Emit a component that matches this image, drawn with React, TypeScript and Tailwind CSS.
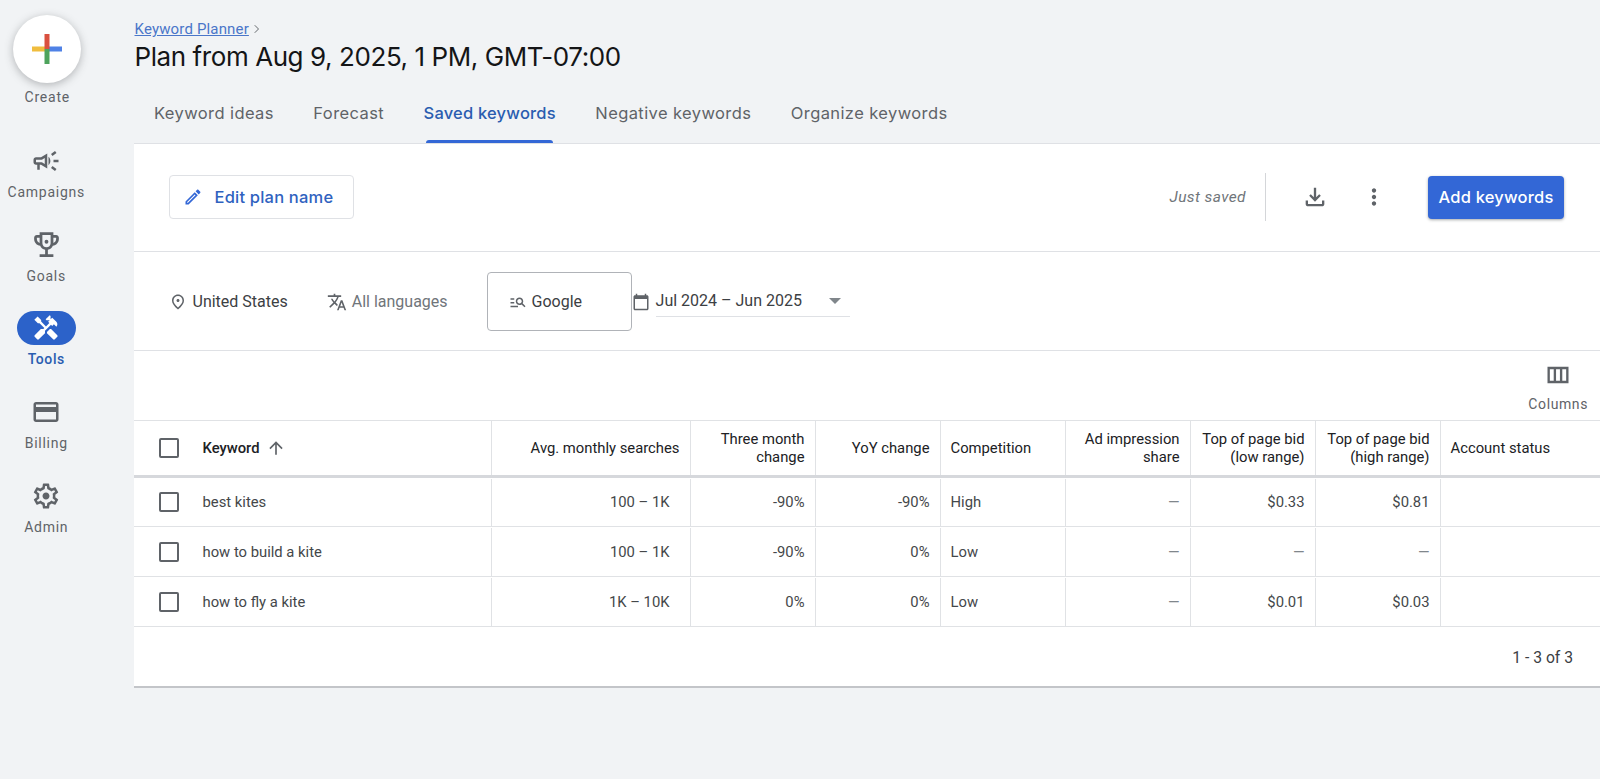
import React from "react";

const P: Record<string, string> = {
  campaign: "M18 11v2h4v-2h-4zm-2 6.61c.96.71 2.21 1.65 3.2 2.39.4-.53.8-1.07 1.2-1.6-.99-.74-2.24-1.68-3.2-2.4-.4.54-.8 1.08-1.2 1.61zM20.4 5.6c-.4-.53-.8-1.07-1.2-1.6-.99.74-2.24 1.68-3.2 2.4.4.53.8 1.07 1.2 1.6.96-.72 2.21-1.65 3.2-2.4zM4 9c-1.1 0-2 .9-2 2v2c0 1.1.9 2 2 2h1v4h2v-4h1l5 3V6L8 9H4zm5.03 1.71L11 9.53v4.94l-1.97-1.18-.48-.29H4v-2h4.55l.48-.29zM15.5 12c0-1.33-.58-2.53-1.5-3.35v6.69c.92-.81 1.5-2.01 1.5-3.34z",
  trophy: "M19 5h-2V3H7v2H5c-1.1 0-2 .9-2 2v1c0 2.55 1.92 4.63 4.39 4.94.63 1.5 1.98 2.63 3.61 2.96V19H7v2h10v-2h-4v-3.1c1.63-.33 2.98-1.46 3.61-2.96C19.08 12.63 21 10.55 21 8V7c0-1.1-.9-2-2-2zM5 8V7h2v3.82C5.84 10.4 5 9.3 5 8zm7 6c-1.65 0-3-1.35-3-3V5h6v6c0 1.65-1.35 3-3 3zm7-6c0 1.3-.84 2.4-2 2.82V7h2v1zM12 8.6a1.4 1.4 0 1 0 0 2.8 1.4 1.4 0 0 0 0-2.8z",
  tools: "M21.67 18.17l-5.3-5.3h-.99l-2.54 2.54v.99l5.3 5.3c.39.39 1.02.39 1.41 0l2.12-2.12c.39-.38.39-1.02 0-1.41zM17.34 10.19l1.41-1.41 2.12 2.12c1.17-1.17 1.17-3.07 0-4.24l-3.54-3.54-1.41 1.41V1.71l-.7-.71-3.54 3.54.71.71h2.83l-1.41 1.41 1.06 1.06-2.89 2.89-4.13-4.13V5.06L4.83 2.04 2 4.87 5.03 7.9h1.41l4.13 4.13-.85.85H7.6l-5.3 5.3c-.39.39-.39 1.02 0 1.41l2.12 2.12c.39.39 1.02.39 1.41 0l5.3-5.3v-2.12l5.15-5.15 1.06 1.05z",
  card: "M20 4H4c-1.11 0-1.99.89-1.99 2L2 18c0 1.11.89 2 2 2h16c1.11 0 2-.89 2-2V6c0-1.11-.89-2-2-2zm0 14H4v-6h16v6zm0-10H4V6h16v2z",
  gear: "M19.43 12.98c.04-.32.07-.64.07-.98 0-.34-.03-.66-.07-.98l2.11-1.65c.19-.15.24-.42.12-.64l-2-3.46c-.09-.16-.26-.25-.44-.25-.06 0-.12.01-.17.03l-2.49 1c-.52-.4-1.08-.73-1.69-.98l-.38-2.65C14.46 2.18 14.25 2 14 2h-4c-.25 0-.46.18-.49.42l-.38 2.65c-.61.25-1.17.59-1.69.98l-2.49-1c-.06-.02-.12-.03-.18-.03-.17 0-.34.09-.43.25l-2 3.46c-.13.22-.07.49.12.64l2.11 1.65c-.04.32-.07.65-.07.98 0 .33.03.66.07.98l-2.11 1.65c-.19.15-.24.42-.12.64l2 3.46c.09.16.26.25.44.25.06 0 .12-.01.17-.03l2.49-1c.52.4 1.08.73 1.69.98l.38 2.65c.03.24.24.42.49.42h4c.25 0 .46-.18.49-.42l.38-2.65c.61-.25 1.17-.59 1.69-.98l2.49 1c.06.02.12.03.18.03.17 0 .34-.09.43-.25l2-3.46c.12-.22.07-.49-.12-.64l-2.11-1.65zm-1.98-1.71c.04.31.05.52.05.73 0 .21-.02.43-.05.73l-.14 1.13.89.7 1.08.84-.7 1.21-1.27-.51-1.04-.42-.9.68c-.43.32-.84.56-1.25.73l-1.06.43-.16 1.13-.2 1.35h-1.4l-.19-1.35-.16-1.13-1.06-.43c-.43-.18-.83-.41-1.23-.71l-.91-.7-1.06.43-1.27.51-.7-1.21 1.08-.84.89-.7-.14-1.13c-.03-.31-.05-.54-.05-.74s.02-.43.05-.73l.14-1.13-.89-.7-1.08-.84.7-1.21 1.27.51 1.04.42.9-.68c.43-.32.84-.56 1.25-.73l1.06-.43.16-1.13.2-1.35h1.39l.19 1.35.16 1.13 1.06.43c.43.18.83.41 1.23.71l.91.7 1.06-.43 1.27-.51.7 1.21-1.07.85-.89.7.14 1.13zM12 9.2c-1.55 0-2.8 1.25-2.8 2.8s1.25 2.8 2.8 2.8 2.8-1.25 2.8-2.8-1.25-2.8-2.8-2.8z",
  edit: "M14.06 9.02l.92.92L5.92 19H5v-.92l9.06-9.06M17.66 3c-.25 0-.51.1-.7.29l-1.83 1.83 3.75 3.75 1.83-1.83c.39-.39.39-1.02 0-1.41l-2.34-2.34c-.2-.2-.45-.29-.71-.29zm-3.6 3.19L3 17.25V21h3.75L17.81 9.94l-3.75-3.75z",
  download: "M12 16l-5-5 1.4-1.45 2.6 2.6V4h2v8.15l2.6-2.6L17 11l-5 5zM6 20c-.55 0-1.02-.2-1.41-.59C4.2 19.02 4 18.55 4 18v-3h2v3h12v-3h2v3c0 .55-.2 1.02-.59 1.41-.39.39-.86.59-1.41.59H6z",
  more: "M12 8c1.1 0 2-.9 2-2s-.9-2-2-2-2 .9-2 2 .9 2 2 2zm0 2c-1.1 0-2 .9-2 2s.9 2 2 2 2-.9 2-2-.9-2-2-2zm0 6c-1.1 0-2 .9-2 2s.9 2 2 2 2-.9 2-2-.9-2-2-2z",
  place: "M12 12c-1.1 0-2-.9-2-2s.9-2 2-2 2 .9 2 2-.9 2-2 2zm6-1.8C18 6.57 15.35 4 12 4s-6 2.57-6 6.2c0 2.34 1.95 5.44 6 9.14 4.05-3.7 6-6.8 6-9.14zM12 2c4.2 0 8 3.22 8 8.2 0 3.32-2.67 7.25-8 11.8-5.33-4.55-8-8.48-8-11.8C4 5.22 7.8 2 12 2z",
  translate: "M12.87 15.07l-2.54-2.51.03-.03c1.74-1.94 2.98-4.17 3.71-6.53H17V4h-7V2H8v2H1v1.99h11.17C11.5 7.92 10.44 9.75 9 11.35 8.07 10.32 7.3 9.19 6.69 8h-2c.73 1.63 1.73 3.17 2.98 4.56l-5.09 5.02L4 19l5-5 3.11 3.11.76-2.04zM18.5 10h-2L12 22h2l1.12-3h4.75L21 22h2l-4.5-12zm-2.62 7l1.62-4.33L19.12 17h-3.24z",
  search: "M7 9H2V7h5v2zm0 3H2v2h5v-2zm13.59 7l-3.83-3.83c-.8.52-1.74.83-2.76.83-2.76 0-5-2.24-5-5s2.24-5 5-5 5 2.24 5 5c0 1.02-.31 1.96-.83 2.75L22 17.59 20.59 19zM17 11c0-1.65-1.35-3-3-3s-3 1.35-3 3 1.35 3 3 3 3-1.35 3-3zM2 19h10v-2H2v2z",
  calendar: "M20 3h-1V1h-2v2H7V1H5v2H4c-1.1 0-2 .9-2 2v16c0 1.1.9 2 2 2h16c1.1 0 2-.9 2-2V5c0-1.1-.9-2-2-2zm0 18H4V8h16v13z",
  columns: "M3 5v14h18V5H3zm5.33 12H5V7h3.33v10zm5.33 0h-3.33V7h3.33v10zM19 17h-3.33V7H19v10z",
  up: "M4 12l1.41 1.41L11 7.83V20h2V7.83l5.58 5.59L20 12l-8-8-8 8z",
};

function Icon({ name, className }: { name: string; className: string }) {
  return (
    <svg viewBox="0 0 24 24" fill="currentColor" className={className}>
      <path d={P[name]} />
    </svg>
  );
}

function NavItem({ icon, label, size, active }: { icon: string; label: string; size: string; active?: boolean }) {
  return (
    <div className="flex flex-col items-center h-[54px] w-[92px]">
      <div className={active ? "flex shrink-0 items-center justify-center w-[59px] h-[34px] rounded-full bg-[#2c62c9] text-white" : "flex shrink-0 items-center justify-center w-[59px] h-[34px] text-[#5f6368]"}>
        <Icon name={icon} className={size} />
      </div>
      <div className={active ? "mt-[4px] shrink-0 h-[20px] leading-[20px] text-[14px] font-medium tracking-[0.6px] text-[#2a5db0]" : "mt-[4px] shrink-0 h-[20px] leading-[20px] text-[14px] tracking-[0.75px] text-[#5f6368]"}>{label}</div>
    </div>
  );
}

function Checkbox() {
  return <div className="w-[20px] h-[20px] shrink-0 rounded-[2px] border-2 border-[#5f6368] bg-white" />;
}

const GRID = "grid grid-cols-[358px_199px_125px_125px_125px_125px_125px_125px_1fr]";
const cell = "flex items-center border-r border-[#e0e2e5] px-[10px] text-[14.8px]";
const numCell = cell + " justify-end text-right";

const ROWS = [
  ["best kites", "100 – 1K", "-90%", "-90%", "High", "—", "$0.33", "$0.81"],
  ["how to build a kite", "100 – 1K", "-90%", "0%", "Low", "—", "—", "—"],
  ["how to fly a kite", "1K – 10K", "0%", "0%", "Low", "—", "$0.01", "$0.03"],
];

const HEAD = ["Avg. monthly searches", "Three month change", "YoY change"];
const HEAD2 = ["Ad impression share", "Top of page bid (low range)", "Top of page bid (high range)"];

export default function App() {
  return (
    <div className="flex w-[1600px] h-[779px] overflow-hidden bg-[#f1f3f5] font-['Roboto',sans-serif]">
      <aside className="w-[133.5px] shrink-0 flex flex-col items-center pr-[41px]">
        <div className="mt-[15px] ml-[2px] w-[68px] h-[68px] shrink-0 rounded-full bg-white shadow-[0_2px_8px_rgba(60,64,67,0.35)] flex items-center justify-center">
          <svg viewBox="0 0 30 30" className="w-[30px] h-[30px]">
            <rect x="0" y="12.5" width="15" height="5" fill="#f0bd3e" />
            <rect x="15" y="12.5" width="15" height="5" fill="#4f81e6" />
            <rect x="12.5" y="15" width="5" height="15" fill="#4ea35c" />
            <rect x="12.5" y="0" width="5" height="15" fill="#d9503f" />
          </svg>
        </div>
        <div className="mt-[4px] ml-[2px] h-[20px] leading-[20px] text-[14px] tracking-[0.75px] text-[#5f6368]">Create</div>
        <nav className="mt-[37px] flex flex-col gap-[29.7px]">
          <NavItem icon="campaign" label="Campaigns" size="w-[30px] h-[30px]" />
          <NavItem icon="trophy" label="Goals" size="w-[33px] h-[33px]" />
          <NavItem icon="tools" label="Tools" size="w-[28px] h-[28px]" active />
          <NavItem icon="card" label="Billing" size="w-[30px] h-[30px]" />
          <NavItem icon="gear" label="Admin" size="w-[30px] h-[30px]" />
        </nav>
      </aside>

      <main className="flex-1 min-w-0 flex flex-col">
        <header className="h-[142.5px] shrink-0 flex flex-col pl-[1px]">
          <div className="mt-[21px] h-[16px] flex items-center gap-[5px] text-[15px] tracking-[0.16px] leading-[16px] text-[#4a76c9]">
            <span className="underline">Keyword Planner</span>
            <svg viewBox="0 0 8 12" className="w-[6px] h-[10px]" fill="none" stroke="#5f6368" strokeWidth="1.3"><path d="M1 1l5 5-5 5" /></svg>
          </div>
          <h1 className="mt-[2px] h-[36px] leading-[36px] text-[26px] tracking-[-0.42px] font-normal font-['Inter',sans-serif] text-[#141517] whitespace-nowrap">Plan from Aug 9, 2025, 1 PM, GMT-07:00</h1>
          <div className="mt-[8px] h-[60px] flex pl-[19.5px] gap-[39.5px] font-['Inter',sans-serif] text-[16.5px] tracking-[0.4px] text-[#5f6368]">
            <div className="h-full flex items-center pt-[1px]">Keyword ideas</div>
            <div className="h-full flex items-center pt-[1px]">Forecast</div>
            <div className="relative h-full flex items-center pt-[1px] font-medium tracking-[0.2px] text-[#2a5db0]">
              Saved keywords
              <span className="absolute left-[2px] right-[3px] bottom-0 h-[3px] rounded-t-[3px] bg-[#3367d6]" />
            </div>
            <div className="h-full flex items-center pt-[1px]">Negative keywords</div>
            <div className="h-full flex items-center pt-[1px]">Organize keywords</div>
          </div>
        </header>

        <section className="h-[545.5px] shrink-0 bg-white border-t border-[#dfe1e5] border-b-2 border-b-[#c3c5c9] flex flex-col">
          <div className="h-[108.5px] shrink-0 border-b border-[#dfe1e5] flex items-center pl-[35px] pr-[36px]">
            <button className="-mt-[1px] w-[185px] h-[44px] rounded-[4px] border border-[#dfe1e5] flex items-center gap-[12px] pl-[13px] pt-[1px] font-['Inter',sans-serif] font-medium text-[16.5px] tracking-[0.2px] text-[#2f62bf]">
              <Icon name="edit" className="w-[20px] h-[20px] text-[#3367d6]" />
              Edit plan name
            </button>
            <div className="ml-auto flex items-center">
              <span className="text-[15.5px] italic text-[#70757a] tracking-[0.4px]">Just saved</span>
              <div className="ml-[19px] w-px h-[48px] bg-[#d4d6d9]" />
              <Icon name="download" className="ml-[35px] w-[28px] h-[28px] text-[#5f6368]" />
              <Icon name="more" className="ml-[32px] w-[26px] h-[26px] text-[#5f6368]" />
              <button className="ml-[41px] w-[136px] h-[43px] rounded-[4px] bg-[#3367d6] shadow-[0_1px_3px_rgba(60,64,67,0.45)] font-['Inter',sans-serif] font-medium text-[16.5px] tracking-[0.2px] text-white">Add keywords</button>
            </div>
          </div>

          <div className="h-[99px] shrink-0 border-b border-[#dfe1e5] flex items-center pt-[1px] text-[16px] text-[#3c4043]">
            <Icon name="place" className="ml-[35px] w-[18px] h-[18px] text-[#5f6368]" />
            <span className="ml-[6px]">United States</span>
            <Icon name="translate" className="ml-[39px] w-[20px] h-[20px] text-[#5f6368]" />
            <span className="ml-[5px] text-[#70757a]">All languages</span>
            <div className="ml-[39px] w-[145px] h-[59px] rounded-[4px] border border-[#b0b3b8] flex items-center pl-[21px]">
              <Icon name="search" className="w-[18px] h-[18px] text-[#5f6368]" />
              <span className="ml-[5px]">Google</span>
            </div>
            <Icon name="calendar" className="ml-[0px] w-[18px] h-[18px] text-[#5f6368]" />
            <div className="relative ml-[6px] w-[194px] h-[30px] border-b border-[#dfe1e5] flex items-center justify-between pr-[9px]">
              <span>Jul 2024 – Jun 2025</span>
              <span className="w-0 h-0 border-x-[6px] border-x-transparent border-t-[6px] border-t-[#80868b]" />
            </div>
          </div>

          <div className="h-[69px] shrink-0 flex flex-col items-end justify-center pr-[12px] pt-[4px] text-[14px] text-[#5f6368] tracking-[0.6px]">
            <div className="flex flex-col items-center">
              <Icon name="columns" className="w-[28px] h-[28px] mb-[5px]" />
              <span className="leading-[20px]">Columns</span>
            </div>
          </div>

          <div className={GRID + " h-[57.5px] shrink-0 border-t border-[#e0e2e5] border-b-[3px] border-b-[#d6d8dc] text-[#202124]"}>
            <div className={cell + " font-medium pl-[25px]"}>
              <Checkbox />
              <span className="ml-[24px]">Keyword</span>
              <Icon name="up" className="ml-[6px] w-[20px] h-[20px] text-[#5f6368]" />
            </div>
            {HEAD.map((h) => <div key={h} className={numCell + " leading-[18px]"}>{h}</div>)}
            <div className={cell + " leading-[18px]"}>Competition</div>
            {HEAD2.map((h) => <div key={h} className={numCell + " leading-[18px]"}>{h}</div>)}
            <div className="flex items-center px-[10px] text-[14.8px]">Account status</div>
          </div>

          {ROWS.map((r) => (
            <div key={r[0]} className={GRID + " h-[49.8px] shrink-0 border-b border-[#e0e2e5] text-[#44474a] pt-[1px]"}>
              <div className={cell + " pl-[25px]"}>
                <Checkbox />
                <span className="ml-[24px]">{r[0]}</span>
              </div>
              <div className={numCell + " pr-[20px]"}>{r[1]}</div>
              <div className={numCell}>{r[2]}</div>
              <div className={numCell}>{r[3]}</div>
              <div className={cell}>{r[4]}</div>
              <div className={numCell + " text-[#80868b]"}>{r[5]}</div>
              <div className={numCell + (r[6] === "—" ? " text-[#80868b]" : "")}>{r[6]}</div>
              <div className={numCell + (r[7] === "—" ? " text-[#80868b]" : "")}>{r[7]}</div>
              <div />
            </div>
          ))}

          <div className="flex-1 flex items-center justify-end pr-[27px] pt-[2px] text-[15.7px] text-[#3c4043]">1 - 3 of 3</div>
        </section>
      </main>
    </div>
  );
}
